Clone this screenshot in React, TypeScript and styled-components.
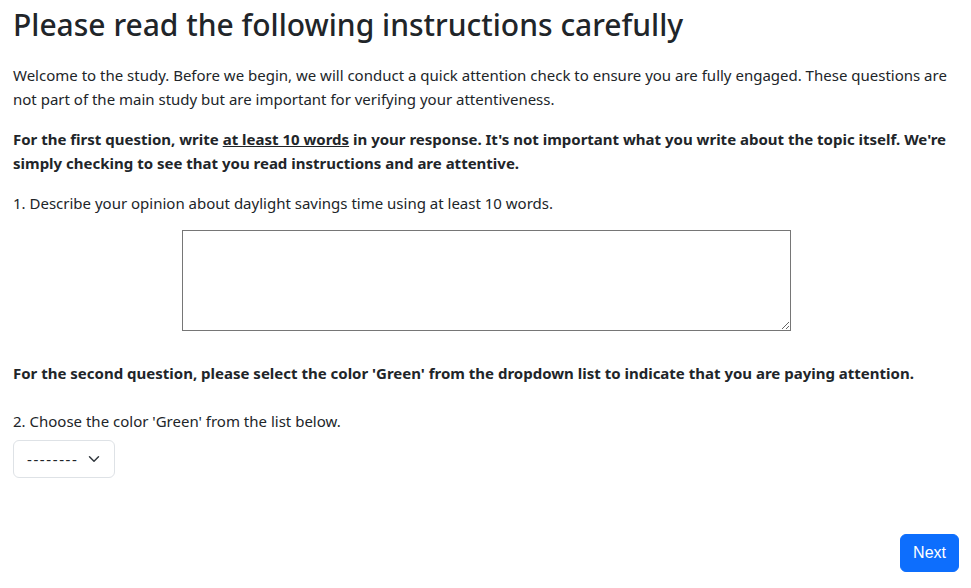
import styled, { createGlobalStyle } from "styled-components";

const GlobalStyle = createGlobalStyle`
  * {
    box-sizing: border-box;
  }
  body {
    margin: 0;
    background: #fff;
    color: #212529;
    font-family: "Noto Sans", "Open Sans", sans-serif;
    font-size: 15px;
    line-height: 24px;
  }
`

function App() {
    return (
        <>
            <GlobalStyle/>
            <Page>
                <Heading>Please read the following instructions carefully</Heading>
                <Text>
                    Welcome to the study. Before we begin, we will conduct a quick attention check to ensure you
                    are fully engaged. These questions are not part of the main study but are important for
                    verifying your attentiveness.
                </Text>
                <Text bold>
                    For the first question, write <u>at least 10 words</u> in your response. It's not important
                    what you write about the topic itself. We're simply checking to see that you read instructions
                    and are attentive.
                </Text>
                <Label htmlFor={'q1'}>1. Describe your opinion about daylight savings time using at least 10 words.</Label>
                <AnswerRow>
                    <Answer id={'q1'} name={'q1'}/>
                </AnswerRow>
                <Text bold gap={24}>
                    For the second question, please select the color 'Green' from the dropdown list to indicate
                    that you are paying attention.
                </Text>
                <Label htmlFor={'q2'} tight>2. Choose the color 'Green' from the list below.</Label>
                <Select id={'q2'} name={'q2'} defaultValue={''}>
                    <option value={''}>--------</option>
                    <option value={'red'}>Red</option>
                    <option value={'green'}>Green</option>
                    <option value={'blue'}>Blue</option>
                </Select>
                <Footer>
                    <NextButton type={'button'}>Next</NextButton>
                </Footer>
            </Page>
        </>
    )
}

export default App;

const Page = styled.div`
  width: 971px;
  padding: 6px 12px 16px 13px;
`

const Heading = styled.h1`
  margin: 0 0 19px;
  font-size: 30px;
  font-weight: 500;
  line-height: 38px;
`

const Text = styled.p<{ bold?: boolean; gap?: number }>`
  margin: 0 0 ${(props) => props.gap ?? 16}px;
  font-weight: ${(props) => (props.bold ? 700 : 400)};
`

const Label = styled.label<{ tight?: boolean }>`
  display: block;
  margin-bottom: ${(props) => (props.tight ? '7px' : '16px')};
`

const AnswerRow = styled.div`
  display: flex;
  justify-content: center;
  margin-top: -1px;
  margin-bottom: 30px;
`

const Answer = styled.textarea`
  display: block;
  width: 609px;
  height: 101px;
  margin: 0;
  border: 1px solid #767676;
  border-radius: 0;
  font: inherit;
`

const Select = styled.select`
  display: block;
  width: 102px;
  height: 38px;
  padding: 6px 36px 6px 13px;
  border: 1px solid #dee2e6;
  border-radius: 6px;
  background-color: #fff;
  background-image: url("data:image/svg+xml,%3csvg xmlns='http://www.w3.org/2000/svg' viewBox='0 0 16 16'%3e%3cpath fill='none' stroke='%23343a40' stroke-linecap='round' stroke-linejoin='round' stroke-width='2' d='m2 5 6 6 6-6'/%3e%3c/svg%3e");
  background-repeat: no-repeat;
  background-position: right 12px center;
  background-size: 16px 12px;
  color: #212529;
  font: inherit;
  letter-spacing: 1.6px;
  appearance: none;
`

const Footer = styled.div`
  display: flex;
  justify-content: flex-end;
  margin-top: 56px;
`

const NextButton = styled.button`
  height: 38px;
  padding: 0 12px;
  border: 1px solid #0d6efd;
  border-radius: 6px;
  background: #0d6efd;
  color: #fff;
  font-family: "Liberation Sans", Arial, sans-serif;
  font-size: 16px;
  cursor: pointer;
`
